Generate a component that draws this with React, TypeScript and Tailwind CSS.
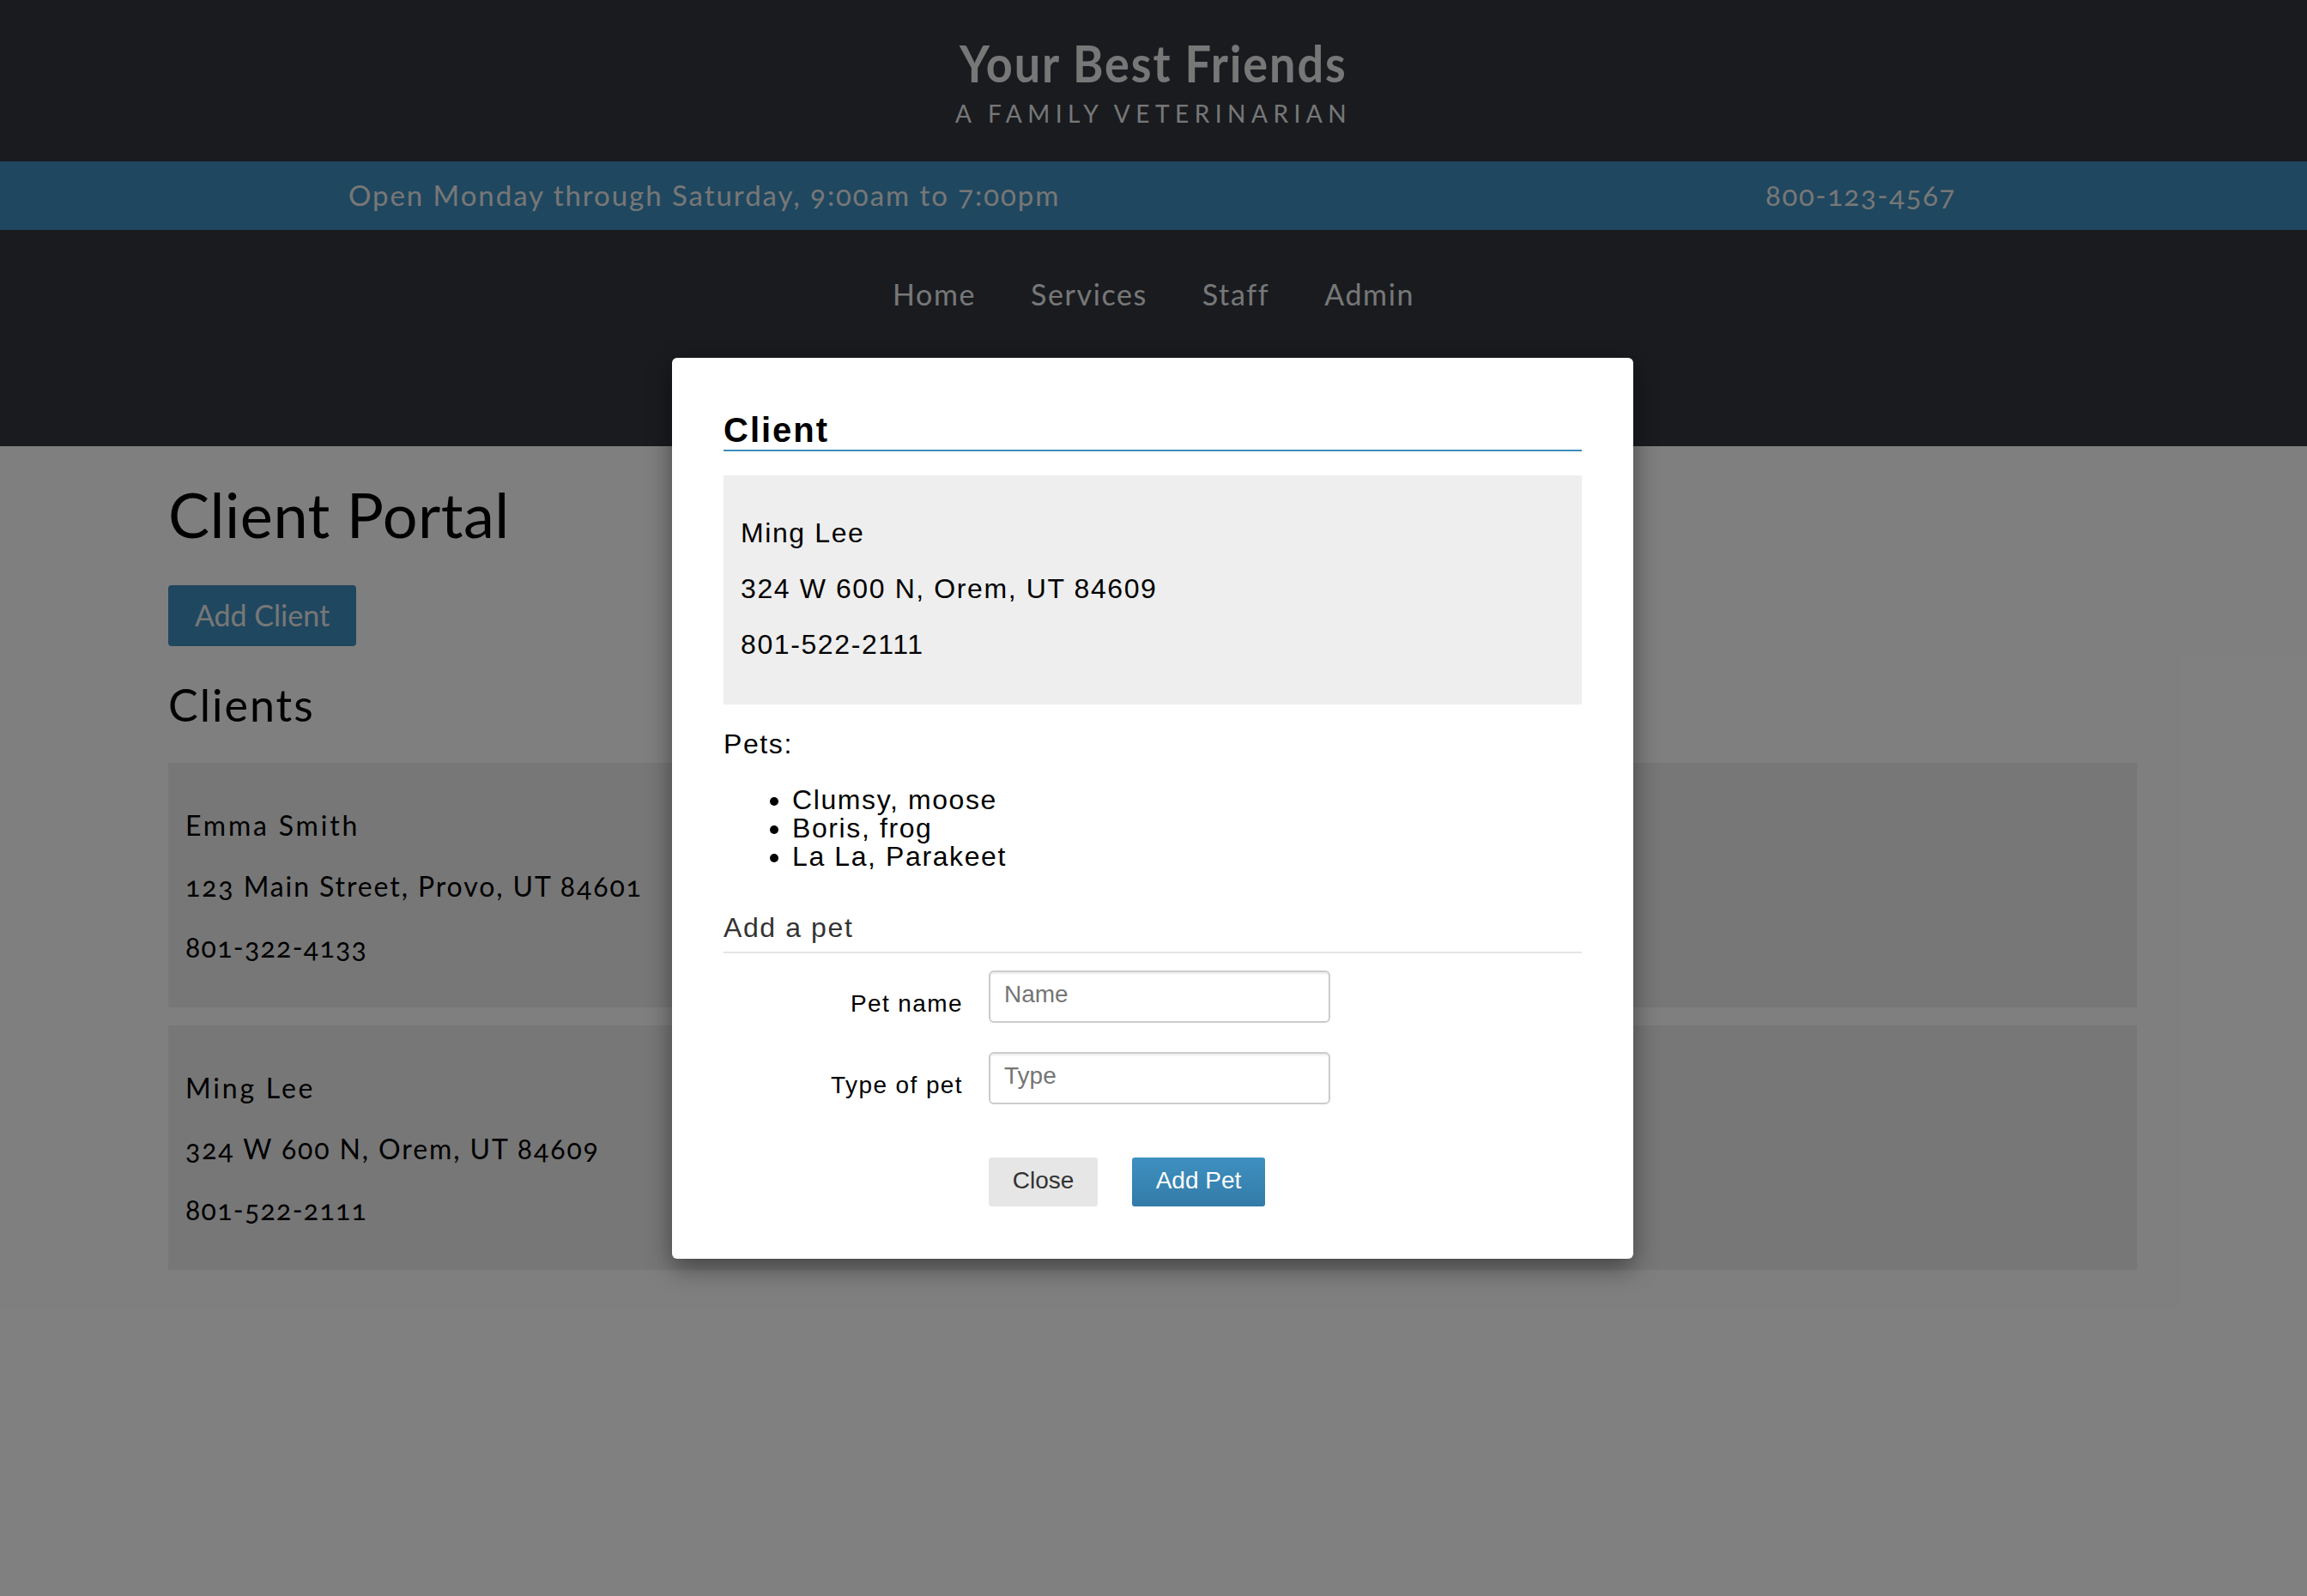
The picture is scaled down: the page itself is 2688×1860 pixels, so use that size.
const clients = [
  { name: "Emma Smith", address: "123 Main Street, Provo, UT 84601", phone: "801-322-4133" },
  { name: "Ming Lee", address: "324 W 600 N, Orem, UT 84609", phone: "801-522-2111" },
];

const navLinks = ["Home", "Services", "Staff", "Admin"];
const pets = ["Clumsy, moose", "Boris, frog", "La La, Parakeet"];

function ClientCard({ name, address, phone }: { name: string; address: string; phone: string }) {
  return (
    <div className="flex flex-col gap-[31px] bg-[#eeeeee] px-[20px] pt-[53px] pb-[50px] text-[32px] leading-[40px] tracking-[1.6px] text-black">
      <p className="tracking-[2.8px]">{name}</p>
      <p className="tracking-[1.9px] [font-variant-numeric:oldstyle-nums]">{address}</p>
      <p className="tracking-[1.3px] [font-variant-numeric:oldstyle-nums]">{phone}</p>
    </div>
  );
}

function PetField({ label, placeholder }: { label: string; placeholder: string }) {
  return (
    <div className="flex items-start">
      <label className="mt-[23px] w-[309px] pr-[30px] text-right text-[28px] leading-[32px] tracking-[1.4px] text-black">
        {label}
      </label>
      <input
        placeholder={placeholder}
        className="h-[61px] w-[398px] rounded-[6px] border-2 border-[#cccccc] bg-white px-[16px] pb-[6px] text-[28px] shadow-[inset_0_2px_2px_rgba(0,0,0,0.075)] outline-none placeholder:text-[#757575]"
      />
    </div>
  );
}

export default function App() {
  return (
    <div className="relative min-h-screen bg-white font-['Lato',sans-serif]">
      <header className="h-[520px] bg-[#32373f] text-[#eeeeee]">
        <div className="flex h-[188px] flex-col items-center pt-[38px]">
          <h1 className="scale-x-[0.9] text-[60px] leading-[70px] font-bold tracking-[2.1px] whitespace-nowrap">
            Your Best Friends
          </h1>
          <p className="mt-[7px] text-[28px] leading-[34px] tracking-[6.5px]">A FAMILY VETERINARIAN</p>
        </div>
        <div className="flex h-[80px] items-center justify-between bg-[#3e8ebe] pr-[409px] pl-[406px] text-[33px] tracking-[1.95px] [font-variant-numeric:oldstyle-nums]">
          <span>Open Monday through Saturday, 9:00am to 7:00pm</span>
          <span className="tracking-[1.6px]">800-123-4567</span>
        </div>
        <nav className="flex justify-center gap-[64px] pt-[53px] text-[34px] leading-[44px] tracking-[1.6px]">
          {navLinks.map((link) => (
            <a key={link} href="#">
              {link}
            </a>
          ))}
        </nav>
      </header>

      <main className="pt-[43px] pr-[198px] pl-[196px]">
        <h2 className="text-[72px] leading-[72px] tracking-[0.5px] text-black">Client Portal</h2>
        <button className="mt-[47px] block h-[71px] w-[219px] rounded-[4px] bg-[#3e8ebe] pb-[2px] text-[34px] text-[#eeeeee]">
          Add Client
        </button>
        <h3 className="mt-[38px] text-[52px] leading-[60px] tracking-[2px] text-black">Clients</h3>
        <div className="mt-[38px] flex flex-col gap-[21px]">
          {clients.map((c) => (
            <ClientCard key={c.name} {...c} />
          ))}
        </div>
      </main>

      <div className="absolute inset-0 bg-black/50" />

      {/* modal */}
      <div className="absolute top-[417px] left-[783px] h-[1050px] w-[1120px] rounded-[6px] bg-white px-[60px] pt-[62px] font-['Liberation_Sans',sans-serif] shadow-[0_10px_30px_rgba(0,0,0,0.45)]">
        <h2 className="border-b-2 border-[#3c8dbc] text-[40px] leading-[45px] font-bold tracking-[2px] text-black">
          Client
        </h2>
        <div className="mt-[28px] flex h-[267px] flex-col gap-[29px] bg-[#eeeeee] px-[20px] pt-[49px] text-[32px] leading-[36px] tracking-[1.6px] text-black">
          <p>Ming Lee</p>
          <p>324 W 600 N, Orem, UT 84609</p>
          <p>801-522-2111</p>
        </div>
        <p className="mt-[28px] text-[32px] leading-[36px] tracking-[1.6px] text-black">Pets:</p>
        <ul className="mt-[31px] list-disc pl-[80px] text-[32px] leading-[33px] tracking-[1.6px] text-black">
          {pets.map((pet) => (
            <li key={pet}>{pet}</li>
          ))}
        </ul>
        <h3 className="mt-[48px] border-b-2 border-[#e5e5e5] pb-[10px] text-[32px] leading-[36px] tracking-[1.6px] text-[#333333]">
          Add a pet
        </h3>
        <div className="mt-[20px] flex flex-col gap-[34px]">
          <PetField label="Pet name" placeholder="Name" />
          <PetField label="Type of pet" placeholder="Type" />
        </div>
        <div className="mt-[62px] flex gap-[40px] pl-[309px] text-[28px]">
          <button className="h-[57px] w-[127px] rounded-[3px] bg-[#e6e6e6] pb-[4px] text-[#333333]">Close</button>
          <button className="h-[57px] w-[155px] rounded-[3px] bg-gradient-to-b from-[#3e90c0] to-[#337ba8] pb-[4px] text-white">
            Add Pet
          </button>
        </div>
      </div>
    </div>
  );
}
